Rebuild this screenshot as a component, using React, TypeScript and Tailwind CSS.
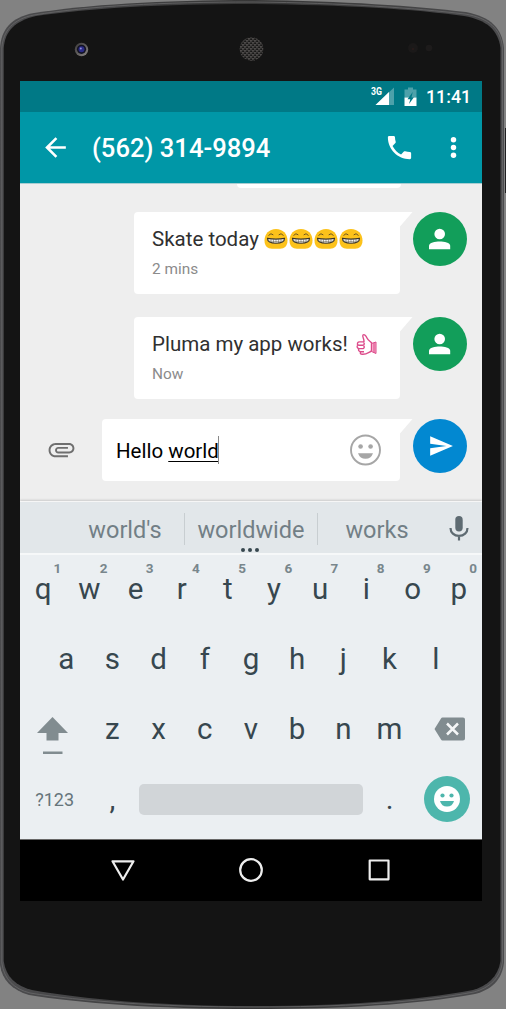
import type { ReactNode } from "react";

const topKeys = ["q", "w", "e", "r", "t", "y", "u", "i", "o", "p"];
const homeKeys = ["a", "s", "d", "f", "g", "h", "j", "k", "l"];
const lowerKeys = ["z", "x", "c", "v", "b", "n", "m"];

function PhoneBody() {
  return (
    <svg className="absolute inset-0" width="506" height="1009" viewBox="0 0 506 1009">
      <defs>
        <linearGradient id="rim" x1="0" x2="1" y1="0" y2="0">
          <stop offset="0" stopColor="#4c4c4e" />
          <stop offset="0.5" stopColor="#363636" />
          <stop offset="1" stopColor="#4c4c4e" />
        </linearGradient>
        <linearGradient id="lensRing" x1="0" x2="1" y1="0" y2="1">
          <stop offset="0" stopColor="#3a3838" />
          <stop offset="1" stopColor="#8a8685" />
        </linearGradient>
        <pattern id="mesh" width="4" height="4" patternUnits="userSpaceOnUse">
          <rect width="4" height="4" fill="#5c5957" />
          <rect x="0.200" y="0.200" width="1.700" height="1.700" rx="0.500" fill="#0c0c0c" />
          <rect x="2.200" y="2.200" width="1.700" height="1.700" rx="0.500" fill="#0c0c0c" />
          <rect x="2.400" y="0.400" width="1.300" height="1.300" rx="0.500" fill="#1a1919" />
          <rect x="0.400" y="2.400" width="1.300" height="1.300" rx="0.500" fill="#1a1919" />
        </pattern>
      </defs>
      <rect x="505" y="128" width="1" height="65" fill="#202022" />
      <path
        d="M0 48C1 30 11 17 34 13C85 5 160 0 253 0C345 1 414 6 466 12C491 17 502 28 504 48V963C502 980 491 990 475 994C415 1005 340 1009 253 1009C155 1009 78 1003 29 995C12 990 2 980 0 965Z"
        fill="url(#rim)"
      />
      <path
        d="M1.8 48C3 31 13 19 34 15C90 6 160 2 253 2C345 3 414 8 465 14C489 18 501 29 502.5 48V962C500 979 489 988 474 992C415 1003 340 1007 253 1007C158 1007 80 1001 30 993C14 989 4 979 1.8 963Z"
        fill="none"
        stroke="#68686a"
        strokeWidth="0.8"
      />
      <path
        d="M3.7 48C5 31 15 21 36 16C92 8 160 4 253 4C345 5 414 9 464 16C487 20 498 30 500.5 48V961C498 977 487 986 473 990C415 1001 340 1006 253 1006C160 1006 82 999 32 990C16 986 6 977 3.7 961Z"
        fill="#141414"
      />
      <circle cx="81.500" cy="49.500" r="6.700" fill="url(#lensRing)" />
      <circle cx="81.500" cy="49.300" r="4.600" fill="#131322" />
      <circle cx="81.500" cy="49.300" r="3" fill="#2a2a86" />
      <circle cx="80.800" cy="48.500" r="1" fill="#8f8fd8" />
      <circle cx="251.5" cy="49" r="11.8" fill="url(#mesh)" />
      <circle cx="413" cy="48" r="5" fill="#1b1919" />
      <circle cx="413" cy="49" r="1" fill="#2b1b1a" />
      <circle cx="429" cy="48" r="3.3" fill="#1d1b1b" />
    </svg>
  );
}

function StatusBar() {
  return (
    <div className="flex h-[31px] shrink-0 items-center justify-end bg-[#007986] pr-[12px] text-white">
      <svg width="24" height="21" viewBox="0 0 24 21" className="mr-[9px]">
        <path d="M23 1.500V19H4.500Z" fill="#4da1aa" />
        <path d="M18 6V19H4.500Z" fill="#fff" />
        <text
          x="0"
          y="9"
          fill="#fff"
          fontSize="10.5"
          fontWeight="700"
          textLength="11"
          lengthAdjust="spacingAndGlyphs"
        >
          3G
        </text>
      </svg>
      <svg width="13" height="20" viewBox="0 0 13 20" className="mr-[9px]">
        <path d="M4 .5H9V2.500H12.500V10.500H.5V2.500H4Z" fill="#4da1aa" />
        <path d="M.5 10.500H12.500V19H.5Z" fill="#fff" />
        <path d="M8.700 5L3.500 12.200H6.300L5 17L9.900 10.200H7.500Z" fill="#007986" />
      </svg>
      <span className="w-[44px] whitespace-nowrap text-[17.8px] leading-none font-medium">11:41</span>
    </div>
  );
}

function Toolbar() {
  return (
    <header className="flex h-[71px] shrink-0 items-center bg-[#0097a7] text-white">
      <svg width="31" height="31" viewBox="0 0 24 24" className="ml-5" fill="currentColor">
        <path d="M20 11H7.830l5.590-5.590L12 4l-8 8 8 8 1.410-1.410L7.830 13H20z" />
      </svg>
      <h1 className="ml-[21px] grow pt-[3px] whitespace-nowrap text-[25.6px] leading-none font-medium">(562) 314-9894</h1>
      <svg width="31" height="31" viewBox="0 0 24 24" className="mr-[23px]" fill="currentColor">
        <path d="M6.620 10.790c1.440 2.830 3.760 5.140 6.590 6.590l2.200-2.200c.27-.27.67-.36 1.020-.24 1.120.37 2.330.57 3.570.57.55 0 1 .45 1 1V20c0 .55-.45 1-1 1-9.390 0-17-7.610-17-17 0-.55.45-1 1-1h3.500c.55 0 1 .45 1 1 0 1.250.2 2.450.57 3.570.11.35.03.74-.25 1.020z" />
      </svg>
      <svg width="31" height="31" viewBox="0 0 24 24" className="mr-[13px]" fill="currentColor">
        <circle cx="12" cy="6" r="2.100" />
        <circle cx="12" cy="12" r="2.100" />
        <circle cx="12" cy="18" r="2.100" />
      </svg>
    </header>
  );
}

function GrinEmoji() {
  return (
    <svg width="24" height="22" viewBox="0 0 24 22" className="mr-px shrink-0">
      <path d="M12 1C19 1 23.500 6 23.500 12.500C23.500 18 20.500 20.700 16 20.700H8C3.500 20.700.5 18 .5 12.500C.5 6 5 1 12 1Z" fill="#fcc21b" />
      <path d="M3.500 10.400Q12 11.800 20.500 10.400Q20.600 15.300 12 15.300Q3.400 15.300 3.500 10.400Z" fill="#fff" stroke="#3b3527" strokeWidth="1.100" />
      <path d="M4.500 13Q12 14 19.500 13M7 10.900V14.500M9.500 11.200V15M12 11.200V15M14.500 11.200V15M17 10.900V14.500" fill="none" stroke="#5b5544" strokeWidth="0.500" />
      <path d="M4.500 7.500Q7 4.300 9.300 6.900M14.700 6.900Q17 4.300 19.500 7.500" fill="none" stroke="#5b4a20" strokeWidth="0.900" />
    </svg>
  );
}

function ThumbEmoji() {
  return (
    <svg width="21" height="23" viewBox="0 0 21 23" className="shrink-0" fill="#fff" stroke="#dc4c8b" strokeWidth="1.400" strokeLinejoin="round">
      <path d="M8 9C8.500 6 5.800 3.500 7 2C8.300.8 10 2.800 11 5C12 7.500 14.500 8.500 15.500 9.700V18C12.500 19.500 10 21.500 6.500 21.300C4 21.300 4 19.700 4.700 18.700C2.500 18.500 2 16.800 3 15.600C.6 15 .6 12.700 2.300 12.200C.5 10.800 1.500 8.700 4 8.900H8" />
      <path d="M2.300 12.200H7.300M3 15.600H7.500M4.700 18.700H8M7.500 9.500Q9 10.500 7.500 12M7.500 12.500Q9 14 7.500 15.400" fill="none" />
      <path d="M15.500 10.500L20 9V20.500L15.500 18.500Z" fill="#f8a9c9" strokeWidth="1" />
      <path d="M18 10V20" strokeWidth="1" />
    </svg>
  );
}

function Tail() {
  return (
    <svg width="13" height="15" viewBox="0 0 13 15" className="shrink-0">
      <path d="M0 0H12.500L0 14.500Z" fill="#fff" />
    </svg>
  );
}

function Avatar() {
  return (
    <div className="flex size-[54px] shrink-0 items-center justify-center rounded-full bg-[#129e5a]">
      <svg width="32" height="31" viewBox="0 0 32 31" fill="#fff">
        <circle cx="15.700" cy="10" r="5.300" />
        <path d="M5 25.200V21.700C5 18.700 11.200 17.400 15.700 17.400S26.200 18.700 26.200 21.700V25.200Z" />
      </svg>
    </div>
  );
}

function Message({ text, time, children }: { text: string; time: string; children: ReactNode }) {
  return (
    <div className="flex h-[82px] items-start justify-end pr-[15px]">
      <div className="h-full w-[266px] rounded-[4px] rounded-tr-none bg-white pt-[14px] pl-[18px]">
        <div className="flex h-[26px] items-center">
          <span className="whitespace-nowrap text-[20.5px] leading-[26px] text-[#303030]">{text}</span>
          {children}
        </div>
        <div className="mt-[7px] text-[15.4px] leading-5 text-[#8b8b8b]">{time}</div>
      </div>
      <Tail />
      <Avatar />
    </div>
  );
}

function Composer() {
  return (
    <div className="flex h-[62px] items-start pr-[15px]">
      <div className="flex h-full w-[82px] items-center justify-center">
        <svg width="31" height="31" viewBox="0 0 24 24" className="-mt-[2px]" fill="#6f6f6f">
          <path d="M2 12.500C2 9.460 4.460 7 7.500 7H18c2.210 0 4 1.790 4 4s-1.790 4-4 4H9.500C8.120 15 7 13.880 7 12.500S8.120 10 9.500 10H17v1.500H9.500c-.55 0-1 .45-1 1s.45 1 1 1H18c1.380 0 2.500-1.120 2.500-2.500S19.380 8.500 18 8.500H7.500c-2.210 0-4 1.790-4 4s1.790 4 4 4H17V18H7.500C4.460 18 2 15.540 2 12.500z" />
        </svg>
      </div>
      <div className="flex h-full w-[298px] items-center justify-between rounded-[4px] rounded-tr-none bg-white pr-[18px] pl-[14px]">
        <div className="flex h-7 items-center pt-[2px] text-[20.5px] leading-7 whitespace-pre text-black">
          <span>Hello </span>
          <span className="underline decoration-1 underline-offset-[3px]">world</span>
          <span className="-mt-[2px] h-7 w-px -translate-x-px bg-[#888]" />
        </div>
        <svg width="32" height="32" viewBox="0 0 32 32">
          <circle cx="15.500" cy="16" r="14.500" fill="none" stroke="#a6a6a6" strokeWidth="1.900" />
          <circle cx="10.600" cy="12.500" r="2.300" fill="#a6a6a6" />
          <circle cx="20.600" cy="12.500" r="2.300" fill="#a6a6a6" />
          <path d="M8 19.300H23Q21 24.800 15.500 24.800T8 19.300Z" fill="#a6a6a6" />
        </svg>
      </div>
      <Tail />
      <button className="flex size-[54px] shrink-0 items-center justify-center rounded-full bg-[#0288d1]">
        <svg width="26" height="26" viewBox="0 0 24 24" className="ml-[2px]" fill="#fff">
          <path d="M2.010 21L23 12 2.010 3 2 10l15 2-15 2z" />
        </svg>
      </button>
    </div>
  );
}

function Key({ label, hint }: { label: string; hint?: string }) {
  return (
    <div className="relative flex h-full w-[46.2px] shrink-0 items-center justify-center pt-[2px] text-[29.5px] leading-none text-[#37474f]">
      {label}
      {hint && <span className="absolute top-[8px] right-[5px] text-[13.5px] leading-none font-bold text-[#78868c]">{hint}</span>}
    </div>
  );
}

function Suggestions() {
  return (
    <div className="relative flex h-[51px] items-center bg-[#e2e7ea] pt-[2px] text-[23.5px] leading-none text-[#727f86]">
      <div className="ml-[46px] w-[118px] pt-[5px] text-center">world's</div>
      <div className="flex h-[32px] w-[134px] items-center justify-center border-x border-[#c8ced1] pt-[5px]">worldwide</div>
      <div className="w-[118px] pt-[5px] text-center">works</div>
      <svg width="22" height="28" viewBox="0 0 22 28" className="ml-[12px]" fill="none">
        <rect x="7.300" y="1" width="7.400" height="15.500" rx="3.700" fill="#5e6b72" />
        <path d="M2.500 13C2.500 17.500 6 20.800 11 20.800S19.500 17.500 19.500 13M11 20.800V25.500" stroke="#5e6b72" strokeWidth="2.200" />
      </svg>
      <div className="absolute bottom-[1px] left-[221px] flex gap-[3px]">
        <i className="size-1 rounded-full bg-[#37474f]" />
        <i className="size-1 rounded-full bg-[#37474f]" />
        <i className="size-1 rounded-full bg-[#37474f]" />
      </div>
    </div>
  );
}

function Keyboard() {
  return (
    <section className="h-[338px] shrink-0 border-t border-[#f6f6f6] bg-[#ebeff2] shadow-[0_-1px_2px_#c9c9c9]">
      <Suggestions />
      <div className="h-[2px] bg-[#f6f8f9]" />
      <div className="-mt-px flex h-[69px]">
        {topKeys.map((key, i) => (
          <Key key={key} label={key} hint={String((i + 1) % 10)} />
        ))}
      </div>
      <div className="flex h-[71px] justify-center">
        {homeKeys.map((key) => (
          <Key key={key} label={key} />
        ))}
      </div>
      <div className="flex h-[70px] items-center">
        <div className="flex w-[69.3px] items-center justify-center pr-[5px]">
          <svg width="31" height="39" viewBox="0 0 31 39" className="mt-[14px]" fill="#818c90">
            <path d="M15.500 0L31 16H21.500V23.500H9.500V16H0Z" />
            <path d="M6 34.500H25.500V37H6Z" />
          </svg>
        </div>
        {lowerKeys.map((key) => (
          <Key key={key} label={key} />
        ))}
        <div className="flex w-[69.3px] justify-center pl-[6px]">
          <svg width="32" height="24" viewBox="0 0 32 24">
            <path d="M8.500.5H29Q31 .5 31 2.500V21.500Q31 23.500 29 23.500H8.500Q7.500 23.500 7 22.500L.5 12L7 1.500Q7.500.5 8.500.5Z" fill="#818c90" />
            <path d="M13 6.500L24 17.500M24 6.500L13 17.500" stroke="#f4f6f7" strokeWidth="2.500" />
          </svg>
        </div>
      </div>
      <div className="flex h-[70px] items-center">
        <div className="w-[69.3px] pt-[2px] text-center text-[18px] leading-none text-[#66757b]">?123</div>
        <Key label="," />
        <div className="mx-[3.500px] h-[31px] w-[224px] rounded-[5px] bg-[#d1d5d8]" />
        <Key label="." />
        <div className="ml-[11px] flex size-[46px] items-center justify-center rounded-full bg-[#4db6ac]">
          <svg width="28" height="28" viewBox="0 0 28 28">
            <circle cx="14" cy="14" r="13" fill="#fff" />
            <circle cx="9.500" cy="10.500" r="2.100" fill="#4db6ac" />
            <circle cx="18.500" cy="10.500" r="2.100" fill="#4db6ac" />
            <path d="M7 16H21Q19.500 21.500 14 21.500T7 16Z" fill="#4db6ac" />
          </svg>
        </div>
      </div>
    </section>
  );
}

function NavigationBar() {
  return (
    <nav className="flex h-[62px] shrink-0 items-center justify-between border-t border-[#686868] bg-black px-[90px] pb-px">
      <svg width="26" height="26" viewBox="0 0 26 26" fill="none" stroke="#eee" strokeWidth="2.200" strokeLinejoin="round">
        <path d="M2.500 4.300H23.500L13 22.500Z" />
      </svg>
      <svg width="26" height="26" viewBox="0 0 26 26" fill="none" stroke="#eee" strokeWidth="2.200">
        <circle cx="13" cy="13" r="10.800" />
      </svg>
      <svg width="26" height="26" viewBox="0 0 26 26" fill="none" stroke="#eee" strokeWidth="2.200" strokeLinejoin="round">
        <rect x="3.700" y="3.500" width="18.800" height="18.800" />
      </svg>
    </nav>
  );
}

export default function App() {
  return (
    <div className="relative h-[1009px] w-[506px] overflow-hidden bg-[#828282] px-5 pt-[81px] font-[Roboto,sans-serif]">
      <PhoneBody />
      <main className="relative flex h-[820px] w-[462px] flex-col overflow-hidden bg-[#eee]">
        <StatusBar />
        <Toolbar />
        <div className="flex h-[318px] shrink-0 flex-col border-t border-[#a8cdd1]">
          <div className="ml-[217px] h-[4px] w-[164px] rounded-b-[4px] bg-white" />
          <div className="mt-[24px]">
            <Message text="Skate today" time="2 mins">
              <div className="ml-[5px] flex">
                <GrinEmoji />
                <GrinEmoji />
                <GrinEmoji />
                <GrinEmoji />
              </div>
            </Message>
          </div>
          <div className="mt-[23px]">
            <Message text="Pluma my app works!" time="Now">
              <div className="ml-[8px]">
                <ThumbEmoji />
              </div>
            </Message>
          </div>
          <div className="mt-[20px]">
            <Composer />
          </div>
        </div>
        <Keyboard />
        <NavigationBar />
      </main>
    </div>
  );
}
